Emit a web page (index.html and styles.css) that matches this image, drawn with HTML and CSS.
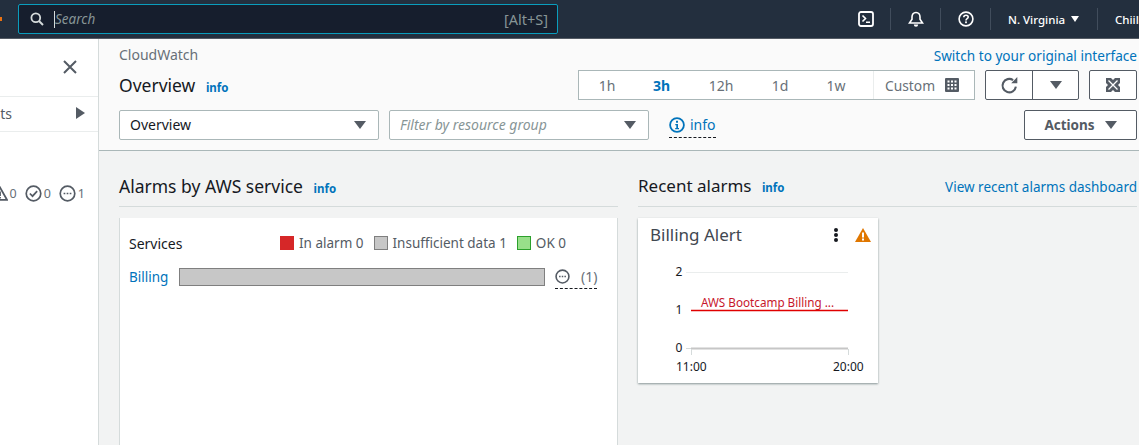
FILE: index.html
```html
<!DOCTYPE html>
<html lang="en">

<head>
    <meta charset="UTF-8">
    <title>CloudWatch</title>
    <link rel="stylesheet" href="styles.css">
</head>

<body>
    <header class="topbar">
        <div class="logo-edge"></div>
        <div class="search">
            <svg class="search-icon" width="14" height="14" viewBox="0 0 14 14"><circle cx="5.800" cy="5.800" r="4.400" fill="none" stroke="#d5dbdb" stroke-width="1.800"/><path d="M9 9l4 4" stroke="#d5dbdb" stroke-width="2"/></svg>
            <span class="caret"></span>
            <span class="search-text">Search</span>
            <span class="search-key">[Alt+S]</span>
        </div>
        <div class="nav-items">
            <div class="nav-item nav-icon">
                <svg width="16" height="16" viewBox="0 0 16 16"><rect x="1" y="1" width="14" height="14" rx="2" fill="none" stroke="#fff" stroke-width="1.800"/><path d="M4.500 4.500L7.500 7.500L4.500 10.500M8 11.300h4" fill="none" stroke="#fff" stroke-width="1.600"/></svg>
            </div>
            <div class="nav-item nav-icon">
                <svg width="16" height="17" viewBox="0 0 16 17"><path d="M8 1.500c-2.600 0-4 2-4 4.500v2.200L1.500 12h13L12 8.200V6c0-2.500-1.400-4.500-4-4.500z" fill="none" stroke="#fff" stroke-width="1.600"/><path d="M5.800 13.500a2.200 2.200 0 0 0 4.400 0z" fill="#fff"/></svg>
            </div>
            <div class="nav-item nav-icon">
                <svg width="16" height="16" viewBox="0 0 16 16"><circle cx="8" cy="8" r="6.900" fill="none" stroke="#fff" stroke-width="1.600"/><path d="M5.800 6.200c0-1.300 1-2 2.200-2s2.200.8 2.200 1.900c0 1.600-2.200 1.600-2.200 3.300" fill="none" stroke="#fff" stroke-width="1.600"/><rect x="7.100" y="10.400" width="1.800" height="1.800" fill="#fff"/></svg>
            </div>
            <div class="nav-item nav-region">N. Virginia <span class="nav-arrow"></span></div>
            <div class="nav-item nav-user">Chiiluu</div>
        </div>
    </header>

    <div class="page">
        <aside class="side">
            <div class="side-close">
                <svg width="14" height="14" viewBox="0 0 14 14"><path d="M1 1l12 12M13 1L1 13" stroke="#545b64" stroke-width="2"/></svg>
            </div>
            <div class="side-row">
                <span>Favorites and recents</span>
                <span class="arrow-right"></span>
            </div>
            <div class="side-status">
                <svg width="16" height="15" viewBox="0 0 16 15"><path d="M8 1.500L15 13.800H1z" fill="none" stroke="#545b64" stroke-width="1.800"/><path d="M8 5.500v4.500M8 11v1.500" stroke="#545b64" stroke-width="1.800"/></svg>
                <span class="status-num">0</span>
                <svg width="17" height="17" viewBox="0 0 14 14"><circle cx="7" cy="7" r="6" fill="none" stroke="#545b64" stroke-width="1.400"/><path d="M4 7l2.200 2.200L10 5" fill="none" stroke="#545b64" stroke-width="1.400"/></svg>
                <span class="status-num">0</span>
                <svg width="17" height="17" viewBox="0 0 14 14"><circle cx="7" cy="7" r="6" fill="none" stroke="#545b64" stroke-width="1.400"/><path d="M3.800 7h1.400M6.300 7h1.400M8.800 7h1.400" stroke="#545b64" stroke-width="1.400"/></svg>
                <span class="status-num">1</span>
            </div>
        </aside>

        <main class="content">
            <section class="head">
                <div class="crumb-row">
                    <span class="crumb">CloudWatch</span>
                    <a class="link">Switch to your original interface</a>
                </div>
                <div class="title-row">
                    <h1 class="title">Overview <span class="info">info</span></h1>
                    <div class="time-range">
                        <span class="t t-1h">1h</span>
                        <span class="t t-3h">3h</span>
                        <span class="t t-12h">12h</span>
                        <span class="t t-1d">1d</span>
                        <span class="t t-1w">1w</span>
                        <span class="t-custom">Custom
                            <svg width="14" height="14" viewBox="0 0 14 14"><rect width="14" height="14" rx="1" fill="#545b64"/><path d="M2.500 2.500h2v2h-2zM6 2.500h2v2H6zM9.500 2.500h2v2h-2zM2.500 6h2v2h-2zM6 6h2v2H6zM9.500 6h2v2h-2zM2.500 9.500h2v2h-2zM6 9.500h2v2H6zM9.500 9.500h2v2h-2z" fill="#fff"/></svg>
                        </span>
                    </div>
                    <div class="btn-split">
                        <span class="btn-part refresh">
                            <svg width="19" height="19" viewBox="0 0 17 17"><path d="M14.200 9.500a6 6 0 1 1-2.500-5.800" fill="none" stroke="#545b64" stroke-width="1.900"/><path d="M15.500 1v5.500H10z" fill="#545b64"/></svg>
                        </span>
                        <span class="btn-part caret-part"><span class="arrow-down"></span></span>
                    </div>
                    <div class="btn-full">
                        <svg width="14" height="14" viewBox="0 0 14 14"><rect width="14" height="14" fill="#545b64"/><path d="M2.500 2.500l9 9M11.500 2.500l-9 9" stroke="#fff" stroke-width="1.300"/><path d="M5 0h4L7 2zM5 14h4l-2-2zM0 5v4l2-2zM14 5v4l-2-2z" fill="#fff"/></svg>
                    </div>
                </div>
                <div class="filter-row">
                    <div class="select"><span>Overview</span><span class="arrow-down"></span></div>
                    <div class="select select-ph"><span>Filter by resource group</span><span class="arrow-down"></span></div>
                    <div class="info-pop">
                        <svg width="16" height="16" viewBox="0 0 16 16"><circle cx="8" cy="8" r="6.900" fill="none" stroke="#0073bb" stroke-width="1.800"/><path d="M7 3.800h2v2H7zM6.300 7h2.700v4h1v1.300H6.200V11h1.100V8.300h-1z" fill="#0073bb"/></svg>
                        <span>info</span>
                    </div>
                    <div class="btn-actions">Actions <span class="arrow-down"></span></div>
                </div>
            </section>

            <section class="widgets">
                <div class="col">
                    <div class="col-head">
                        <h2 class="col-title col-title-wide">Alarms by AWS service <span class="info">info</span></h2>
                    </div>
                    <div class="service-card">
                        <div class="legend-row">
                            <span class="services">Services</span>
                            <span class="legend"><i class="sw sw-red"></i>In alarm 0</span>
                            <span class="legend"><i class="sw sw-grey"></i>Insufficient data 1</span>
                            <span class="legend"><i class="sw sw-green"></i>OK 0</span>
                        </div>
                        <div class="bar-row">
                            <a class="link billing">Billing</a>
                            <div class="bar"></div>
                            <div class="bar-count">
                                <svg width="15" height="15" viewBox="0 0 14 14"><circle cx="7" cy="7" r="6" fill="none" stroke="#545b64" stroke-width="1.500"/><path d="M3.800 7h1.400M6.300 7h1.400M8.800 7h1.400" stroke="#545b64" stroke-width="1.500"/></svg>
                                <span>(1)</span>
                            </div>
                        </div>
                    </div>
                </div>
                <div class="col">
                    <div class="col-head">
                        <h2 class="col-title">Recent alarms <span class="info">info</span></h2>
                        <a class="link">View recent alarms dashboard</a>
                    </div>
                    <div class="alarm-card">
                        <div class="alarm-top">
                            <span class="alarm-name">Billing Alert</span>
                            <span class="dots"><i></i><i></i><i></i></span>
                            <svg class="warn" width="16" height="14" viewBox="0 0 16 14"><path d="M8 0l8 14H0z" fill="#e07700"/><path d="M7 4.500h2v5H7zM7 10.500h2v2H7z" fill="#fff"/></svg>
                        </div>
                        <svg class="chart" width="240" height="122" viewBox="0 0 240 122">
                            <path d="M48 14.500h162" stroke="#eaeded"/>
                            <path d="M53 52.500h157" stroke="#e00000" stroke-width="1.300"/>
                            <path d="M53 90.500h157" stroke="#c6c6c6" stroke-width="2"/>
                            <path d="M53.500 91v6M210.500 91v6M48 90.500h5" stroke="#d5dbdb"/>
                            <text class="chart-alarm" x="63" y="49">AWS Bootcamp Billing ...</text>
                            <text class="chart-label" x="41" y="18" text-anchor="middle">2</text>
                            <text class="chart-label" x="41" y="56" text-anchor="middle">1</text>
                            <text class="chart-label" x="41" y="94" text-anchor="middle">0</text>
                            <text class="chart-label" x="38" y="113">11:00</text>
                            <text class="chart-label" x="195" y="113">20:00</text>
                        </svg>
                    </div>
                </div>
            </section>
        </main>
    </div>
</body>

</html>
```

FILE: styles.css
```css
* {
    box-sizing: border-box;
}

html, body {
    margin: 0;
    height: 445px;
    overflow: hidden;
}

body {
    font-family: "Noto Sans", "Open Sans", sans-serif;
    font-size: 14px;
    color: #16191f;
    background: #f2f3f3;
}

.topbar {
    display: flex;
    align-items: center;
    height: 39px;
    background: #232f3e;
    border-bottom: 1px solid #545b64;
}

.logo-edge {
    flex: none;
    width: 2px;
    height: 4px;
    margin-right: 16px;
    background: #ec7211;
}

.search {
    flex: none;
    display: flex;
    align-items: center;
    width: 540px;
    height: 30px;
    padding: 0 9px 0 11px;
    background: #161e2d;
    border: 1px solid #0a9dbd;
    border-radius: 2px;
}

.search-icon {
    margin-right: 10px;
}

.caret {
    width: 1px;
    height: 17px;
    background: #d5dbdb;
}

.search-text {
    flex: 1;
    font-style: italic;
    font-size: 13.500px;
    color: #879596;
}

.search-key {
    font-size: 14.500px;
    color: #879596;
}

.nav-items {
    flex: none;
    display: flex;
    align-items: center;
    margin-left: 283px;
    white-space: nowrap;
}

.nav-item {
    display: flex;
    align-items: center;
    height: 22px;
    color: #fff;
    border-right: 1px solid #414d5c;
}

.nav-icon {
    justify-content: center;
    width: 50px;
}

.nav-region {
    gap: 6px;
    width: 107px;
    padding-left: 17px;
    font-size: 11.500px;
    font-weight: 500;
}

.nav-user {
    padding-left: 17px;
    font-size: 11.500px;
    font-weight: 500;
    border-right: 0;
}

.nav-arrow {
    border-left: 4px solid transparent;
    border-right: 4px solid transparent;
    border-top: 6px solid #fff;
}

.page {
    display: flex;
    height: 406px;
}

.side {
    flex: none;
    width: 99px;
    overflow: hidden;
    background: #fff;
    border-right: 1px solid #d5dbdb;
}

.side-close {
    display: flex;
    justify-content: flex-end;
    height: 57px;
    padding: 21px 21px 0 0;
}

.side-row {
    display: flex;
    justify-content: flex-end;
    align-items: center;
    gap: 64px;
    height: 36px;
    padding: 0 13px 2px 0;
    font-size: 14px;
    color: #545b64;
    border-top: 1px solid #eaeded;
    border-bottom: 1px solid #eaeded;
    white-space: nowrap;
}

.arrow-right {
    flex: none;
    border-top: 6px solid transparent;
    border-bottom: 6px solid transparent;
    border-left: 9px solid #545b64;
}

.side-status {
    display: flex;
    justify-content: flex-end;
    align-items: center;
    gap: 2px;
    margin-top: 53px;
    padding-right: 13px;
    font-size: 12.500px;
    color: #687078;
}

.side-status svg {
    flex: none;
}

.status-num {
    margin-right: 6px;
}

.status-num:last-child {
    margin-right: 0;
}

.content {
    flex: 1;
    min-width: 0;
}

.head {
    height: 112px;
    padding: 0 2px 0 20px;
    background: #fafafa;
    border-bottom: 1px solid #aab7b8;
}

.link {
    font-size: 13.500px;
    color: #0073bb;
    text-decoration: none;
}

.crumb-row {
    display: flex;
    justify-content: space-between;
    align-items: center;
    height: 32px;
    padding-bottom: 2px;
}

.crumb-row .link {
    padding-top: 2px;
    font-size: 13.600px;
}

.crumb {
    color: #687078;
}

.title-row {
    display: flex;
    align-items: center;
    height: 28px;
}

.title {
    flex: 1;
    margin: 0;
    font-size: 17.500px;
    font-weight: 400;
}

.info {
    margin-left: 6px;
    font-size: 11.500px;
    font-weight: 700;
    color: #0073bb;
}

.time-range {
    display: flex;
    align-items: center;
    width: 397px;
    height: 30px;
    background: #fff;
    border: 1px solid #aab7b8;
    color: #687078;
}

.t {
    text-align: center;
}

.t-1h {
    width: 56px;
}

.t-3h {
    width: 53px;
    font-weight: 700;
    color: #0073bb;
}

.t-12h {
    width: 66px;
}

.t-1d {
    width: 52px;
}

.t-1w {
    width: 60px;
}

.t-custom {
    display: flex;
    align-items: center;
    justify-content: space-between;
    flex: 1;
    height: 100%;
    margin-left: 7px;
    padding: 0 15px 0 11px;
    font-size: 13.800px;
    border-left: 1px solid #eaeded;
}

.btn-split {
    display: flex;
    width: 94px;
    height: 30px;
    margin-left: 10px;
    background: #fff;
    border: 1px solid #545b64;
    border-radius: 2px;
}

.btn-part {
    display: flex;
    align-items: center;
    justify-content: center;
}

.refresh {
    width: 47px;
    border-right: 1px solid #545b64;
}

.caret-part {
    flex: 1;
}

.btn-full {
    display: flex;
    align-items: center;
    justify-content: center;
    width: 48px;
    height: 30px;
    margin-left: 10px;
    background: #fff;
    border: 1px solid #545b64;
    border-radius: 2px;
}

.arrow-down {
    border-left: 6px solid transparent;
    border-right: 6px solid transparent;
    border-top: 8px solid #545b64;
}

.filter-row {
    display: flex;
    align-items: center;
    gap: 10px;
    margin-top: 11px;
}

.select {
    display: flex;
    align-items: center;
    justify-content: space-between;
    width: 260px;
    height: 30px;
    padding: 0 12px 1px 10px;
    background: #fff;
    border: 1px solid #aab7b8;
    border-radius: 2px;
}

.select-ph {
    font-style: italic;
    color: #879596;
}

.info-pop {
    display: flex;
    align-items: center;
    gap: 5px;
    margin-left: 10px;
    height: 26px;
    color: #0073bb;
    border-bottom: 1px dashed #16191f;
}

.btn-actions {
    display: flex;
    align-items: center;
    justify-content: center;
    gap: 10px;
    width: 113px;
    height: 30px;
    margin-left: auto;
    font-weight: 700;
    font-size: 13.500px;
    color: #545b64;
    background: #fff;
    border: 1px solid #545b64;
    border-radius: 2px;
}

.widgets {
    display: flex;
    gap: 20px;
    padding: 20px 2px 0 20px;
}

.col {
    flex: 1;
    min-width: 0;
}

.col-head {
    display: flex;
    align-items: center;
    justify-content: space-between;
    height: 36px;
    padding-bottom: 6px;
    border-bottom: 1px solid #d5dbdb;
}

.col-head .link {
    padding-top: 2px;
}

.col-title {
    margin: 0;
    font-size: 17px;
    font-weight: 400;
}

.col-title-wide {
    font-size: 17.500px;
}

.service-card {
    height: 240px;
    margin-top: 11px;
    padding: 15px 9px;
    background: #fff;
    border-left: 1px solid #d5dbdb;
    border-right: 1px solid #d5dbdb;
}

.legend-row {
    display: flex;
    align-items: center;
    height: 20px;
}

.services {
    flex: 1;
}

.legend {
    display: flex;
    align-items: center;
    gap: 5px;
    margin-left: 10px;
    font-size: 13.500px;
    color: #545b64;
}

.sw {
    width: 14px;
    height: 14px;
}

.sw-red {
    background: #d62728;
}

.sw-grey {
    background: #c7c7c7;
    border: 1px solid #7f7f7f;
}

.sw-green {
    background: #98df8a;
    border: 1px solid #2ca02c;
}

.legend:last-child {
    margin-right: 42px;
}

.bar-row {
    display: flex;
    align-items: center;
    margin-top: 12px;
}

.billing {
    width: 40px;
}

.bar {
    width: 366px;
    height: 18px;
    margin-left: 10px;
    background: #c7c7c7;
    border: 1px solid #7f7f7f;
}

.bar-count {
    display: flex;
    align-items: center;
    gap: 11px;
    height: 24px;
    margin-left: 10px;
    color: #687078;
    border-bottom: 1px dashed #16191f;
}

.alarm-card {
    width: 240px;
    height: 165px;
    margin-top: 11px;
    background: #fff;
    box-shadow: 0 1px 2px #879596;
}

.alarm-top {
    display: flex;
    align-items: center;
    height: 33px;
    padding: 0 7px 0 12px;
}

.alarm-name {
    flex: 1;
    font-size: 17px;
    color: #414750;
}

.dots {
    display: flex;
    flex-direction: column;
    gap: 1px;
    margin-right: 17px;
}

.dots i {
    width: 4px;
    height: 4px;
    background: #16191f;
    border-radius: 50%;
}

.chart {
    display: block;
    margin-top: 7px;
}

.chart-label {
    font-size: 12px;
    fill: #16191f;
}

.chart-alarm {
    font-size: 11.700px;
    fill: #c7162b;
}
```
